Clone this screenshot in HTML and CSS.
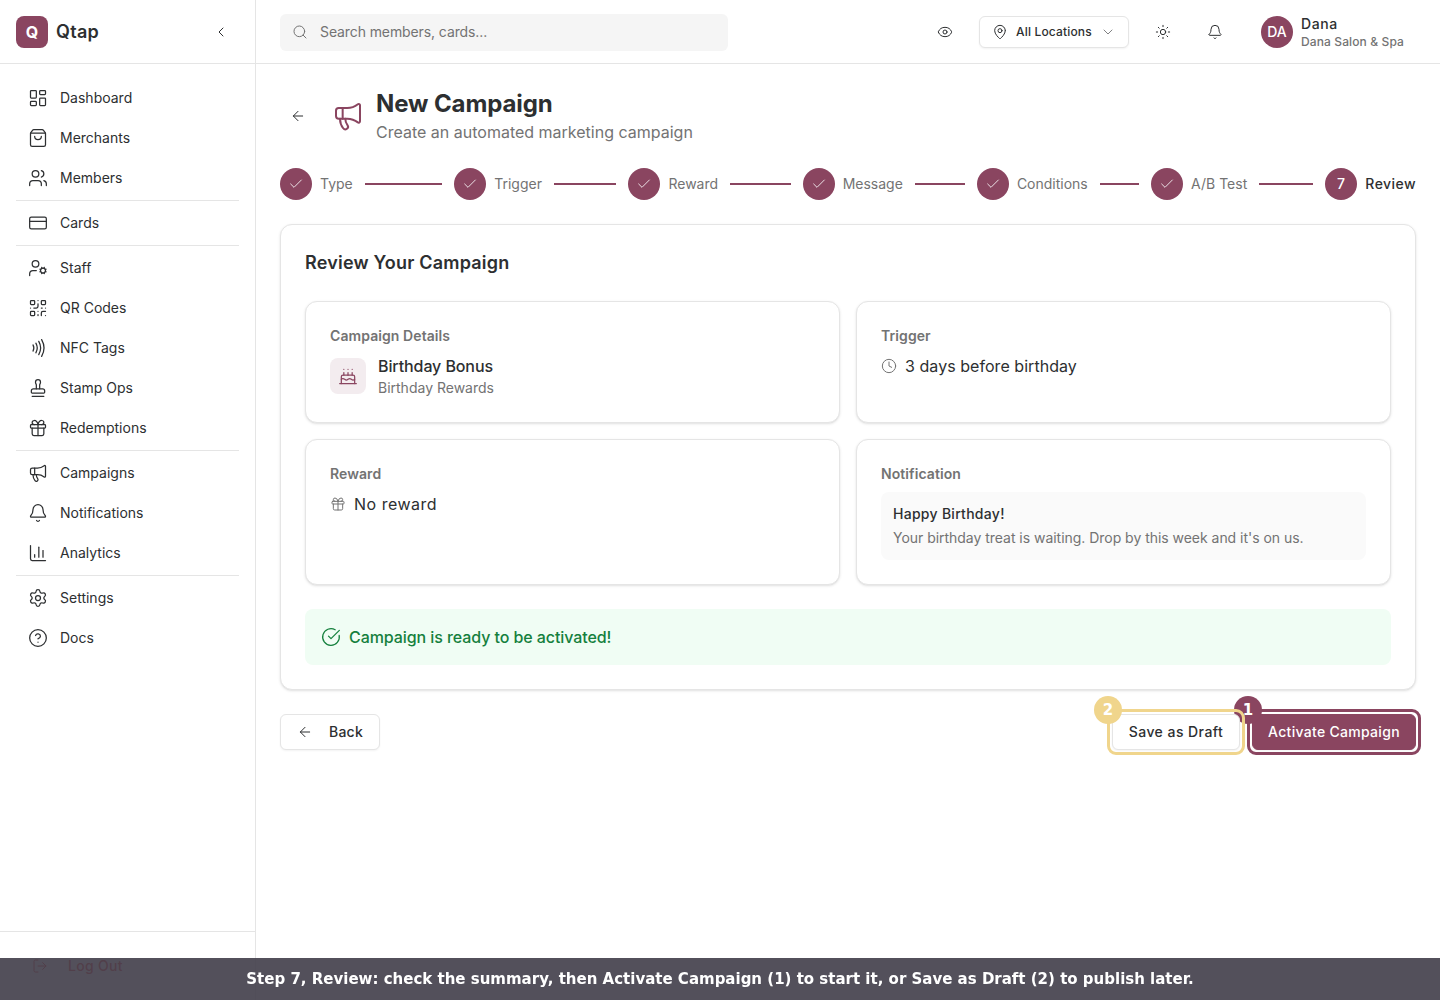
FILE: index.html
```html
<!DOCTYPE html>
<html lang="en">
  <head>
    <title>New Campaign - Qtap</title>
    <meta charset="utf-8">
    <meta name="viewport" content="width=device-width, initial-scale=1">
    <link rel="stylesheet" href="styles.css">
  </head>
  <body>
    <!-- Icon sprite -->
    <svg class="sprite">
      <symbol id="i-dashboard" viewBox="0 0 24 24"><rect width="7" height="9" x="3" y="3" rx="1"/><rect width="7" height="5" x="14" y="3" rx="1"/><rect width="7" height="9" x="14" y="12" rx="1"/><rect width="7" height="5" x="3" y="16" rx="1"/></symbol>
      <symbol id="i-bag" viewBox="0 0 24 24"><path d="M16 10a4 4 0 0 1-8 0"/><path d="M3.103 6.034h17.794"/><path d="M3.4 5.467a2 2 0 0 0-.4 1.2V20a2 2 0 0 0 2 2h14a2 2 0 0 0 2-2V6.667a2 2 0 0 0-.4-1.2l-2-2.667A2 2 0 0 0 17 2H7a2 2 0 0 0-1.6.8z"/></symbol>
      <symbol id="i-users" viewBox="0 0 24 24"><path d="M16 21v-2a4 4 0 0 0-4-4H6a4 4 0 0 0-4 4v2"/><path d="M16 3.128a4 4 0 0 1 0 7.744"/><path d="M22 21v-2a4 4 0 0 0-3-3.87"/><circle cx="9" cy="7" r="4"/></symbol>
      <symbol id="i-card" viewBox="0 0 24 24"><rect width="20" height="14" x="2" y="5" rx="2"/><path d="M2 10h20"/></symbol>
      <symbol id="i-staff" viewBox="0 0 24 24"><path d="M10 15H6a4 4 0 0 0-4 4v2"/><path d="m14.305 16.53.923-.382"/><path d="m15.228 13.852-.923-.383"/><path d="m16.852 12.228-.383-.923"/><path d="m16.852 17.772-.383.924"/><path d="m19.148 12.228.383-.923"/><path d="m19.53 18.696-.382-.924"/><path d="m20.772 13.852.924-.383"/><path d="m20.772 16.148.924.383"/><circle cx="18" cy="15" r="3"/><circle cx="9" cy="7" r="4"/></symbol>
      <symbol id="i-qr" viewBox="0 0 24 24"><rect width="5" height="5" x="3" y="3" rx="1"/><rect width="5" height="5" x="16" y="3" rx="1"/><rect width="5" height="5" x="3" y="16" rx="1"/><path d="M21 16h-3a2 2 0 0 0-2 2v3"/><path d="M21 21v.01"/><path d="M12 7v3a2 2 0 0 1-2 2H7"/><path d="M3 12h.01"/><path d="M12 3h.01"/><path d="M12 16v.01"/><path d="M16 12h1"/><path d="M21 12v.01"/><path d="M12 21v-1"/></symbol>
      <symbol id="i-nfc" viewBox="0 0 24 24"><path d="M6 8.32a7.43 7.43 0 0 1 0 7.36"/><path d="M9.46 6.21a11.76 11.76 0 0 1 0 11.58"/><path d="M12.91 4.1a15.91 15.91 0 0 1 .01 15.8"/><path d="M16.37 2a20.16 20.16 0 0 1 0 20"/></symbol>
      <symbol id="i-stamp" viewBox="0 0 24 24"><path d="M14 13V8.5C14 7 15 7 15 5a3 3 0 0 0-6 0c0 2 1 2 1 3.5V13"/><path d="M20 15.5a2.5 2.5 0 0 0-2.5-2.5h-11A2.5 2.5 0 0 0 4 15.5V17a1 1 0 0 0 1 1h14a1 1 0 0 0 1-1z"/><path d="M5 22h14"/></symbol>
      <symbol id="i-gift" viewBox="0 0 24 24"><rect x="3" y="8" width="18" height="4" rx="1"/><path d="M12 8v13"/><path d="M19 12v7a2 2 0 0 1-2 2H7a2 2 0 0 1-2-2v-7"/><path d="M7.5 8a2.5 2.5 0 0 1 0-5A4.8 8 0 0 1 12 8a4.8 8 0 0 1 4.5-5 2.5 2.5 0 0 1 0 5"/></symbol>
      <symbol id="i-megaphone" viewBox="0 0 24 24"><path d="M11 6a13 13 0 0 0 8.4-2.8A1 1 0 0 1 21 4v12a1 1 0 0 1-1.6.8A13 13 0 0 0 11 14H5a2 2 0 0 1-2-2V8a2 2 0 0 1 2-2z"/><path d="M6 14a12 12 0 0 0 2.4 7.2 2 2 0 0 0 3.2-2.4A8 8 0 0 1 10 14"/><path d="M8 6v8"/></symbol>
      <symbol id="i-bell" viewBox="0 0 24 24"><path d="M10.268 21a2 2 0 0 0 3.464 0"/><path d="M3.262 15.326A1 1 0 0 0 4 17h16a1 1 0 0 0 .74-1.673C19.41 13.956 18 12.499 18 8A6 6 0 0 0 6 8c0 4.499-1.411 5.956-2.738 7.326"/></symbol>
      <symbol id="i-chart" viewBox="0 0 24 24"><path d="M3 3v16a2 2 0 0 0 2 2h16"/><path d="M18 17V9"/><path d="M13 17V5"/><path d="M8 17v-3"/></symbol>
      <symbol id="i-settings" viewBox="0 0 24 24"><path d="M9.671 4.136a2.34 2.34 0 0 1 4.659 0 2.34 2.34 0 0 0 3.319 1.915 2.34 2.34 0 0 1 2.33 4.033 2.34 2.34 0 0 0 0 3.831 2.34 2.34 0 0 1-2.33 4.033 2.34 2.34 0 0 0-3.319 1.915 2.34 2.34 0 0 1-4.659 0 2.34 2.34 0 0 0-3.32-1.915 2.34 2.34 0 0 1-2.33-4.033 2.34 2.34 0 0 0 0-3.831A2.34 2.34 0 0 1 6.35 6.051a2.34 2.34 0 0 0 3.319-1.915"/><circle cx="12" cy="12" r="3"/></symbol>
      <symbol id="i-help" viewBox="0 0 24 24"><circle cx="12" cy="12" r="10"/><path d="M9.09 9a3 3 0 0 1 5.83 1c0 2-3 3-3 3"/><path d="M12 17h.01"/></symbol>
      <symbol id="i-logout" viewBox="0 0 24 24"><path d="m16 17 5-5-5-5"/><path d="M21 12H9"/><path d="M9 21H5a2 2 0 0 1-2-2V5a2 2 0 0 1 2-2h4"/></symbol>
      <symbol id="i-chevron-left" viewBox="0 0 24 24"><path d="m15 18-6-6 6-6"/></symbol>
      <symbol id="i-chevron-down" viewBox="0 0 24 24"><path d="m6 9 6 6 6-6"/></symbol>
      <symbol id="i-search" viewBox="0 0 24 24"><path d="m21 21-4.34-4.34"/><circle cx="11" cy="11" r="8"/></symbol>
      <symbol id="i-eye" viewBox="0 0 24 24"><path d="M2.062 12.348a1 1 0 0 1 0-.696 10.75 10.75 0 0 1 19.876 0 1 1 0 0 1 0 .696 10.75 10.75 0 0 1-19.876 0"/><circle cx="12" cy="12" r="3"/></symbol>
      <symbol id="i-pin" viewBox="0 0 24 24"><path d="M20 10c0 4.993-5.539 10.193-7.399 11.799a1 1 0 0 1-1.202 0C9.539 20.193 4 14.993 4 10a8 8 0 0 1 16 0"/><circle cx="12" cy="10" r="3"/></symbol>
      <symbol id="i-sun" viewBox="0 0 24 24"><circle cx="12" cy="12" r="4"/><path d="M12 2v2"/><path d="M12 20v2"/><path d="m4.93 4.93 1.41 1.41"/><path d="m17.66 17.66 1.41 1.41"/><path d="M2 12h2"/><path d="M20 12h2"/><path d="m6.34 17.66-1.41 1.41"/><path d="m19.07 4.93-1.41 1.41"/></symbol>
      <symbol id="i-arrow-left" viewBox="0 0 24 24"><path d="m12 19-7-7 7-7"/><path d="M19 12H5"/></symbol>
      <symbol id="i-check" viewBox="0 0 24 24"><path d="M20 6 9 17l-5-5"/></symbol>
      <symbol id="i-cake" viewBox="0 0 24 24"><path d="M20 21v-8a2 2 0 0 0-2-2H6a2 2 0 0 0-2 2v8"/><path d="M4 16s.5-1 2-1 2.5 2 4 2 2.5-2 4-2 2.5 2 4 2 2-1 2-1"/><path d="M2 21h20"/><path d="M7 8v3"/><path d="M12 8v3"/><path d="M17 8v3"/><path d="M7 4h.01"/><path d="M12 4h.01"/><path d="M17 4h.01"/></symbol>
      <symbol id="i-clock" viewBox="0 0 24 24"><circle cx="12" cy="12" r="10"/><path d="M12 6v6l4 2"/></symbol>
      <symbol id="i-check-circle" viewBox="0 0 24 24"><path d="M21.801 10A10 10 0 1 1 17 3.335"/><path d="m9 11 3 3L22 4"/></symbol>
    </svg>

    <div class="app">
      <aside class="sidebar">
        <div class="brand">
          <span class="brand-logo">Q</span>
          <span class="brand-name">Qtap</span>
          <button class="icon-btn collapse"><svg class="icon"><use href="#i-chevron-left"/></svg></button>
        </div>
        <nav class="nav">
          <a class="nav-item"><svg class="icon icon-md"><use href="#i-dashboard"/></svg>Dashboard</a>
          <a class="nav-item"><svg class="icon icon-md"><use href="#i-bag"/></svg>Merchants</a>
          <a class="nav-item"><svg class="icon icon-md"><use href="#i-users"/></svg>Members</a>
          <hr>
          <a class="nav-item"><svg class="icon icon-md"><use href="#i-card"/></svg>Cards</a>
          <hr>
          <a class="nav-item"><svg class="icon icon-md"><use href="#i-staff"/></svg>Staff</a>
          <a class="nav-item"><svg class="icon icon-md"><use href="#i-qr"/></svg>QR Codes</a>
          <a class="nav-item"><svg class="icon icon-md"><use href="#i-nfc"/></svg>NFC Tags</a>
          <a class="nav-item"><svg class="icon icon-md"><use href="#i-stamp"/></svg>Stamp Ops</a>
          <a class="nav-item"><svg class="icon icon-md"><use href="#i-gift"/></svg>Redemptions</a>
          <hr>
          <a class="nav-item"><svg class="icon icon-md"><use href="#i-megaphone"/></svg>Campaigns</a>
          <a class="nav-item"><svg class="icon icon-md"><use href="#i-bell"/></svg>Notifications</a>
          <a class="nav-item"><svg class="icon icon-md"><use href="#i-chart"/></svg>Analytics</a>
          <hr>
          <a class="nav-item"><svg class="icon icon-md"><use href="#i-settings"/></svg>Settings</a>
          <a class="nav-item"><svg class="icon icon-md"><use href="#i-help"/></svg>Docs</a>
        </nav>
        <div class="sidebar-footer">
          <button class="logout"><svg class="icon"><use href="#i-logout"/></svg>Log Out</button>
        </div>
      </aside>

      <div class="page">
        <header class="topbar">
          <div class="search"><svg class="icon"><use href="#i-search"/></svg>Search members, cards...</div>
          <div class="topbar-right">
            <button class="icon-btn"><svg class="icon"><use href="#i-eye"/></svg></button>
            <button class="btn location"><svg class="icon"><use href="#i-pin"/></svg>All Locations<svg class="icon chevron"><use href="#i-chevron-down"/></svg></button>
            <button class="icon-btn"><svg class="icon"><use href="#i-sun"/></svg></button>
            <button class="icon-btn"><svg class="icon"><use href="#i-bell"/></svg></button>
            <div class="profile">
              <span class="avatar">DA</span>
              <div>
                <div class="profile-name">Dana</div>
                <div class="profile-org">Dana Salon &amp; Spa</div>
              </div>
            </div>
          </div>
        </header>

        <main class="content">
          <div class="page-head">
            <button class="icon-btn"><svg class="icon"><use href="#i-arrow-left"/></svg></button>
            <div class="page-title">
              <svg class="icon icon-lg"><use href="#i-megaphone"/></svg>
              <div>
                <h1>New Campaign</h1>
                <p>Create an automated marketing campaign</p>
              </div>
            </div>
          </div>

          <div class="steps">
            <div class="step"><span class="step-dot"><svg class="icon"><use href="#i-check"/></svg></span>Type<i class="step-line"></i></div>
            <div class="step"><span class="step-dot"><svg class="icon"><use href="#i-check"/></svg></span>Trigger<i class="step-line"></i></div>
            <div class="step"><span class="step-dot"><svg class="icon"><use href="#i-check"/></svg></span>Reward<i class="step-line"></i></div>
            <div class="step"><span class="step-dot"><svg class="icon"><use href="#i-check"/></svg></span>Message<i class="step-line"></i></div>
            <div class="step"><span class="step-dot"><svg class="icon"><use href="#i-check"/></svg></span>Conditions<i class="step-line"></i></div>
            <div class="step"><span class="step-dot"><svg class="icon"><use href="#i-check"/></svg></span>A/B Test<i class="step-line"></i></div>
            <div class="step current"><span class="step-dot">7</span>Review</div>
          </div>

          <section class="card review">
            <h2>Review Your Campaign</h2>
            <div class="summary">
              <div class="card">
                <h3>Campaign Details</h3>
                <div class="details">
                  <span class="details-icon"><svg class="icon icon-md"><use href="#i-cake"/></svg></span>
                  <div>
                    <div class="details-name">Birthday Bonus</div>
                    <div class="details-type">Birthday Rewards</div>
                  </div>
                </div>
              </div>
              <div class="card">
                <h3>Trigger</h3>
                <div class="value"><svg class="icon"><use href="#i-clock"/></svg>3 days before birthday</div>
              </div>
              <div class="card">
                <h3>Reward</h3>
                <div class="value value-reward"><svg class="icon"><use href="#i-gift"/></svg>No reward</div>
              </div>
              <div class="card">
                <h3>Notification</h3>
                <div class="message">
                  <div class="message-title">Happy Birthday!</div>
                  <div class="message-body">Your birthday treat is waiting. Drop by this week and it's on us.</div>
                </div>
              </div>
            </div>
            <div class="ready"><svg class="icon icon-md"><use href="#i-check-circle"/></svg>Campaign is ready to be activated!</div>
          </section>

          <div class="actions">
            <button class="btn back"><svg class="icon"><use href="#i-arrow-left"/></svg>Back</button>
            <div class="actions-right">
              <div class="marked marked-draft">
                <button class="btn">Save as Draft</button>
                <span class="ring"></span>
                <span class="marker">2</span>
              </div>
              <div class="marked marked-activate">
                <button class="btn btn-primary">Activate Campaign</button>
                <span class="ring"></span>
                <span class="marker">1</span>
              </div>
            </div>
          </div>
        </main>
      </div>
    </div>

    <div class="caption">Step 7, Review: check the summary, then Activate Campaign (1) to start it, or Save as Draft (2) to publish later.</div>
  </body>
</html>
```

FILE: styles.css
```css
* {
  box-sizing: border-box;
}

body {
  background: #fff;
  color: #2d2f31;
  font: 14px/20px Inter, sans-serif;
  margin: 0;
}

h1, h2, h3, p {
  margin: 0;
}

button {
  font: inherit;
  color: inherit;
  border: 0;
  background: none;
  padding: 0;
}

.sprite {
  display: none;
}

.icon {
  width: 16px;
  height: 16px;
  flex-shrink: 0;
  fill: none;
  stroke: currentColor;
  stroke-width: 1.5;
  stroke-linecap: round;
  stroke-linejoin: round;
}

.icon-md {
  width: 20px;
  height: 20px;
}

.icon-lg {
  width: 32px;
  height: 32px;
  color: #8a4560;
}

.icon-btn {
  display: flex;
  align-items: center;
  justify-content: center;
  width: 36px;
  height: 36px;
}

.app {
  display: flex;
  height: 100vh;
  overflow: hidden;
}

/* Sidebar */
.sidebar {
  display: flex;
  flex-direction: column;
  width: 256px;
  flex-shrink: 0;
  border-right: 1px solid #e5e5e5;
}

.brand {
  display: flex;
  align-items: center;
  gap: 8px;
  height: 64px;
  padding: 0 16px;
  border-bottom: 1px solid #e5e5e5;
}

.brand-logo {
  display: flex;
  align-items: center;
  justify-content: center;
  width: 32px;
  height: 32px;
  border-radius: 8px;
  background: #8a4560;
  color: #fff;
  font-size: 16px;
  font-weight: 700;
}

.brand-name {
  font-size: 18px;
  font-weight: 600;
  letter-spacing: 0.3px;
}

.collapse {
  margin-left: auto;
}

.nav {
  display: flex;
  flex-direction: column;
  flex: 1;
  gap: 4px;
  padding: 16px;
}

.nav hr {
  width: 100%;
  height: 1px;
  margin: 0;
  border: 0;
  background: #e5e5e5;
}

.nav-item {
  display: flex;
  align-items: center;
  gap: 12px;
  height: 36px;
  padding: 0 12px;
}

.sidebar-footer {
  padding: 16px;
  border-top: 1px solid #e5e5e5;
}

.logout {
  display: flex;
  align-items: center;
  gap: 20px;
  height: 36px;
  padding: 0 16px;
  color: #dc2626;
  font-weight: 500;
  letter-spacing: 0.3px;
}

/* Top bar */
.page {
  flex: 1;
  min-width: 0;
}

.topbar {
  display: flex;
  align-items: center;
  justify-content: space-between;
  height: 64px;
  padding: 0 24px;
  border-bottom: 1px solid #e5e5e5;
}

.search {
  display: flex;
  align-items: center;
  gap: 12px;
  width: 448px;
  height: 37px;
  margin-top: 2px;
  padding: 0 12px 1px;
  border-radius: 6px;
  background: #f5f5f5;
  color: #737373;
  letter-spacing: -0.1px;
}

.topbar-right {
  display: flex;
  align-items: center;
  gap: 16px;
}

.btn {
  display: flex;
  align-items: center;
  justify-content: center;
  height: 36px;
  padding: 0 16px;
  border: 1px solid #e5e5e5;
  border-radius: 6px;
  background: #fff;
  font-weight: 500;
  white-space: nowrap;
  box-shadow: 0 1px 2px rgba(0, 0, 0, 0.05);
}

.location {
  gap: 8px;
  width: 150px;
  height: 32px;
  padding: 0 12px;
  font-size: 12px;
  letter-spacing: 0.16px;
}

.chevron {
  opacity: 0.6;
}

.profile {
  display: flex;
  align-items: center;
  gap: 8px;
  width: 167px;
  padding-left: 12px;
  font-weight: 500;
}

.profile-name {
  letter-spacing: 0.6px;
}

.profile-org {
  color: #737373;
  font-size: 12px;
  line-height: 16px;
  letter-spacing: 0.12px;
  white-space: nowrap;
}

.avatar {
  display: flex;
  align-items: center;
  justify-content: center;
  width: 32px;
  height: 32px;
  flex-shrink: 0;
  border-radius: 50%;
  background: #8a4560;
  color: #fff;
}

/* Page heading */
.content {
  display: flex;
  flex-direction: column;
  gap: 24px;
  padding: 24px;
}

.page-head {
  display: flex;
  align-items: center;
  gap: 16px;
}

.page-title {
  display: flex;
  align-items: center;
  gap: 12px;
}

.page-title h1 {
  font-size: 24px;
  line-height: 32px;
  font-weight: 700;
  letter-spacing: -0.1px;
}

.page-title p {
  color: #737373;
  font-size: 16px;
  line-height: 24px;
}

/* Steps */
.steps {
  display: flex;
}

.step {
  display: flex;
  align-items: center;
  flex: 1;
  color: #737373;
}

.step.current {
  flex: none;
  color: #2d2f31;
  font-weight: 500;
  letter-spacing: 0.45px;
}

.step-dot {
  display: flex;
  align-items: center;
  justify-content: center;
  width: 32px;
  height: 32px;
  margin-right: 8px;
  border-radius: 50%;
  background: #8a4560;
  color: #fff;
  font-weight: 500;
}

.step-dot .icon {
  stroke-width: 1.25;
}

.step-line {
  flex: 1;
  height: 2px;
  margin: 0 12px;
  background: #8a4560;
}

/* Cards */
.card {
  padding: 24px;
  border: 1px solid #e5e5e5;
  border-radius: 12px;
  background: #fff;
  box-shadow: 0 1px 3px rgba(0, 0, 0, 0.1), 0 1px 2px -1px rgba(0, 0, 0, 0.1);
}

.review {
  display: flex;
  flex-direction: column;
  gap: 24px;
}

.review h2 {
  font-size: 18px;
  line-height: 28px;
  font-weight: 600;
  letter-spacing: 0.2px;
}

.summary {
  display: grid;
  grid-template-columns: 1fr 1fr;
  gap: 16px;
}

.summary h3 {
  margin-bottom: 8px;
  color: #737373;
  font-size: 14px;
  font-weight: 600;
  letter-spacing: 0.08px;
}

.details {
  display: flex;
  align-items: center;
  gap: 12px;
}

.details-icon {
  display: flex;
  align-items: center;
  justify-content: center;
  width: 36px;
  height: 36px;
  border-radius: 8px;
  background: #f3ecef;
  color: #8a4560;
}

.details-name {
  font-size: 16px;
  line-height: 24px;
  font-weight: 500;
  letter-spacing: -0.1px;
}

.details-type,
.message-body {
  color: #737373;
}

.value {
  display: flex;
  align-items: center;
  gap: 8px;
  font-size: 16px;
  line-height: 24px;
  letter-spacing: 0.05px;
}

.value-reward {
  letter-spacing: 0.5px;
}

.value .icon {
  color: #737373;
}

.message {
  padding: 12px;
  border-radius: 8px;
  background: #fafafa;
}

.message-title {
  margin-bottom: 4px;
  font-weight: 500;
  letter-spacing: 0.28px;
}

.message-body {
  letter-spacing: -0.03px;
}

.ready {
  display: flex;
  align-items: center;
  gap: 8px;
  padding: 16px;
  border-radius: 8px;
  background: #f0fdf4;
  color: #15803d;
  font-size: 16px;
  line-height: 24px;
  font-weight: 500;
  letter-spacing: -0.08px;
}

/* Footer actions */
.actions,
.actions-right {
  display: flex;
  justify-content: space-between;
}

.actions-right {
  gap: 12px;
}

.back {
  gap: 16px;
  width: 100px;
  letter-spacing: 0.2px;
}

.btn-primary {
  border-color: #8a4560;
  background: #8a4560;
  color: #fff;
}

/* Numbered highlights over the buttons */
.marked {
  position: relative;
}

.marked .btn {
  width: 100%;
}

.marked-draft {
  width: 128px;
  z-index: 2;
}

.marked-draft .btn {
  letter-spacing: 0.45px;
}

.marked-activate {
  width: 164px;
}

.marked-activate .btn {
  letter-spacing: 0.3px;
}

.ring {
  position: absolute;
  inset: -5px;
  border: 3px solid #8a4560;
  border-radius: 9px;
}

.marker {
  position: absolute;
  top: -18px;
  left: -18px;
  width: 28px;
  height: 28px;
  border-radius: 50%;
  background: #8a4560;
  color: #fff;
  font: bold 15px/28px "DejaVu Sans", sans-serif;
  text-align: center;
}

.marked-draft .ring {
  border-color: #f0d58c;
}

.marked-draft .marker {
  background: #f0d58c;
}

.caption {
  position: fixed;
  left: 0;
  right: 0;
  bottom: 0;
  z-index: 10;
  height: 42px;
  background: rgba(68, 65, 77, 0.92);
  color: #fff;
  font: bold 15px/42px "DejaVu Sans", sans-serif;
  text-align: center;
}
```
